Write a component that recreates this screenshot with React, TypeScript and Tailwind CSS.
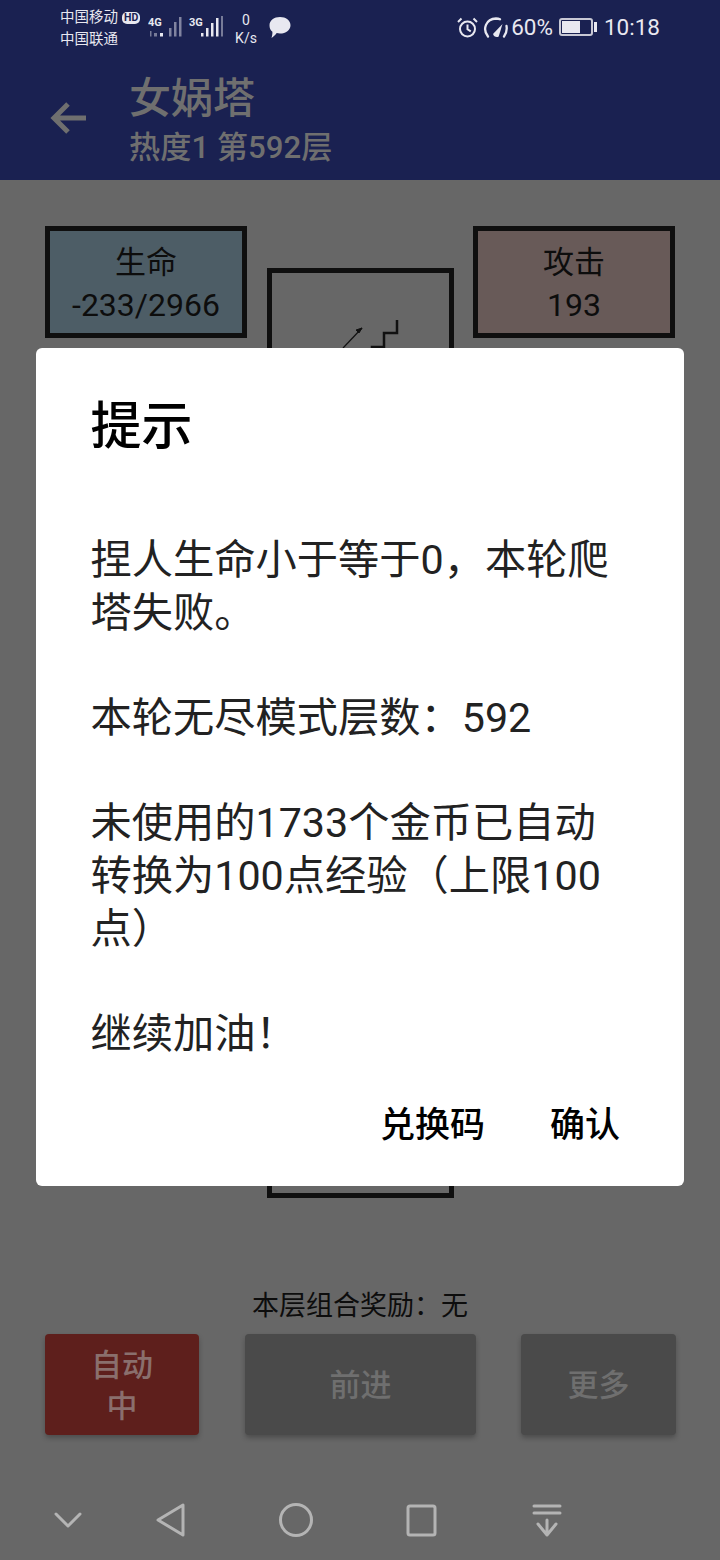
const cjk = { fontFamily: 'Roboto, "Noto Sans CJK SC", sans-serif' };

function StatusLeft() {
  return (
    <div className="flex items-start pl-[60px] pt-[7px] text-[#e8e8f0]">
      <div className="flex w-[88px] flex-col text-[14.5px] leading-[22px]">
        <div className="flex items-center gap-[4px] whitespace-nowrap">
          <span>中国移动</span>
          <span className="rounded-[5px] bg-[#e8e8f0] px-[2px] text-[10.5px] leading-[12px] font-bold text-[#1a2151]">HD</span>
        </div>
        <span>中国联通</span>
      </div>
      <svg width="80" height="34" viewBox="148 7 80 34" className="shrink-0">
        <text x="148" y="26" fontSize="11" fontWeight="700" fill="#e8e8f0" fontFamily="Roboto">4G</text>
        <text x="189" y="26" fontSize="11" fontWeight="700" fill="#e8e8f0" fontFamily="Roboto">3G</text>
        <g fill="#e8e8f0">
          <rect x="150" y="31" width="1.500" height="5.500" fillOpacity=".45" />
          <rect x="154" y="33" width="3" height="3.500" fillOpacity=".45" />
          <rect x="160" y="33" width="3" height="3.500" />
          <rect x="169" y="28" width="2.500" height="8.500" fillOpacity=".5" />
          <rect x="174" y="22" width="2.500" height="14.500" fillOpacity=".5" />
          <rect x="179" y="17" width="2.500" height="19.500" fillOpacity=".5" />
          <rect x="201" y="33" width="2.500" height="3.500" />
          <rect x="206" y="28" width="2.500" height="8.500" />
          <rect x="211" y="23" width="2.500" height="13.500" />
          <rect x="216" y="18" width="2.500" height="18.500" />
          <rect x="221" y="16" width="2" height="20.500" fillOpacity=".45" />
        </g>
      </svg>
      <div className="ml-[4px] flex w-[28px] flex-col items-center pt-[4px] text-[14px] leading-[18px]">
        <span>0</span>
        <span>K/s</span>
      </div>
      <svg width="22" height="22" viewBox="0 0 22 22" fill="#e8e8f0" className="ml-[9px] mt-[10px] shrink-0">
        <path d="M11 0c5.800 0 10.500 3.500 10.500 8.200S16.800 16.500 11 16.500c-1.200 0-2.300-.1-3.300-.4C6.300 18 4.300 20 2.500 21c.6-2 1-4 .9-6.300C1.300 13.200.5 11 .5 8.200.5 3.500 5.200 0 11 0z" />
      </svg>
    </div>
  );
}

function StatusRight() {
  return (
    <div className="flex h-[54px] items-center pr-[60px] text-[#e8e8f0]">
      <svg width="21" height="21" viewBox="0 0 21 21" fill="none" stroke="#e8e8f0" strokeWidth="2">
        <circle cx="10.500" cy="12" r="7.500" />
        <path d="M10.500 7.500v4.800l3.300 2M1 5l3.500-3.500M20 5l-3.500-3.500" />
      </svg>
      <svg width="25" height="21" viewBox="0 0 25 21" fill="none" stroke="#e8e8f0" strokeWidth="2.300" strokeLinecap="round" className="ml-[5px]">
        <path d="M5 19.500C-1 12 3 2 13 1.500c1.500 0 3 .3 4 .8M23.500 9c.7 4-.2 7.500-2.500 10.500" />
        <path d="M10 17l9.500-10-3.800 12.500c-1.500 1-3 .5-4.700-.5z" fill="#e8e8f0" stroke="none" />
      </svg>
      <span className="ml-[3px] text-[22.500px] leading-[28px]">60%</span>
      <div className="ml-[6px] flex h-[18px] w-[34px] items-stretch rounded-[3px] border-2 border-[#c8c8d4] p-[1px]">
        <div className="w-[18px] bg-[#e8e8f0]" />
      </div>
      <div className="ml-[1px] h-[10px] w-[3px] bg-[#e8e8f0]" />
      <span className="ml-[7px] text-[22.500px] leading-[28px]">10:18</span>
    </div>
  );
}

function Stat({ label, value, bg }: { label: string; value: string; bg: string }) {
  return (
    <div className={`flex h-[112px] w-[202px] flex-col items-center justify-center border-[5px] border-[#0f0f0f] pt-[3px] ${bg} text-[#0d0d0d]`}>
      <span className="text-[31px] leading-[43px]">{label}</span>
      <span className="text-[32px] leading-[43px]">{value}</span>
    </div>
  );
}

function ActionButton({ className, children }: { className: string; children: React.ReactNode }) {
  return (
    <div className={`flex h-[101px] shrink-0 items-center justify-center rounded-[4px] pt-[3px] text-center text-[31px] font-medium shadow-[0_3px_5px_rgba(0,0,0,0.25)] ${className}`}>
      {children}
    </div>
  );
}

function Dialog() {
  return (
    <div className="absolute left-[36px] top-[348px] h-[838px] w-[648px] rounded-[6px] bg-white pl-[54.500px] pr-[56px] pt-[50px] text-black">
      <h2 className="text-[51px] leading-[58px] font-medium">提示</h2>
      <p className="mt-[78px] whitespace-pre-line text-[41.250px] leading-[52.670px] text-[#222222]">
        {'捏人生命小于等于0，本轮爬塔失败。\n\n本轮无尽模式层数：592\n\n未使用的1733个金币已自动转换为100点经验（上限100点）\n\n继续加油！'}
      </p>
      <div className="absolute bottom-[36px] right-[64px] flex gap-[65px] text-[35px] leading-[48px] font-medium">
        <span>兑换码</span>
        <span>确认</span>
      </div>
    </div>
  );
}

export default function App() {
  return (
    <div className="relative h-[1560px] w-[720px] overflow-hidden bg-[#676767]" style={cjk}>
      <header className="h-[180px] bg-[#1a2151]">
        <div className="flex h-[60px] justify-between">
          <StatusLeft />
          <StatusRight />
        </div>
        <div className="flex items-start pl-[50px] pt-[15px]">
          <svg width="36" height="32" viewBox="0 0 36 32" fill="none" stroke="#6f6f6f" strokeWidth="5" className="mt-[27px] shrink-0">
            <path d="M36 16H4M18 2 4 16l14 14" />
          </svg>
          <div className="ml-[43px] text-[#6f6f6f]">
            <div className="text-[42px] leading-[48px] font-medium">女娲塔</div>
            <div className="mt-[5px] text-[31.200px] leading-[40px] font-medium">热度1 第592层</div>
          </div>
        </div>
      </header>

      <main className="flex justify-between px-[45px] pt-[46px]">
        <Stat label="生命" value="-233/2966" bg="bg-[#4d5d66]" />
        <div className="mt-[42px] h-[930px] w-[187px] border-[5px] border-[#0f0f0f]">
          <svg width="177" height="76" viewBox="0 0 177 76" fill="none" stroke="#111111">
            <path d="M71 75 90 55" strokeWidth="1.200" />
            <path d="M90 55l-6 2 3 3z" fill="#111111" />
            <path d="M125 47V60H112V74H100V76" strokeWidth="2.500" />
          </svg>
        </div>
        <Stat label="攻击" value="193" bg="bg-[#685a58]" />
      </main>

      <div className="absolute inset-x-0 top-[1287px] text-center text-[27px] leading-[38px] text-[#0d0d0d]">
        本层组合奖励：无
      </div>

      <section className="absolute left-[45px] right-[44px] top-[1334px] flex">
        <ActionButton className="w-[154px] bg-[#5e1f1c] leading-[41px] text-[#8a6f6d]">自动<br />中</ActionButton>
        <ActionButton className="ml-[46px] w-[231px] bg-[#4a4a4a] text-[#6f6f6f]">前进</ActionButton>
        <ActionButton className="ml-[45px] w-[155px] bg-[#4a4a4a] text-[#6f6f6f]">更多</ActionButton>
      </section>

      <nav className="absolute inset-x-0 bottom-0 h-[80px]">
        <svg width="720" height="80" viewBox="0 0 720 80" fill="none" stroke="#b4b4b4" strokeWidth="3" strokeLinejoin="round" strokeLinecap="round">
          <path d="M56 34l12 12 12-12" />
          <path d="M183 25V55L158 40z" />
          <circle cx="296" cy="40" r="15.500" />
          <rect x="408" y="26" width="27" height="29" rx="2" />
          <path d="M534 26h26M534 33h26M547 40v15M538 44l9 11 9-11" />
        </svg>
      </nav>

      <Dialog />
    </div>
  );
}
